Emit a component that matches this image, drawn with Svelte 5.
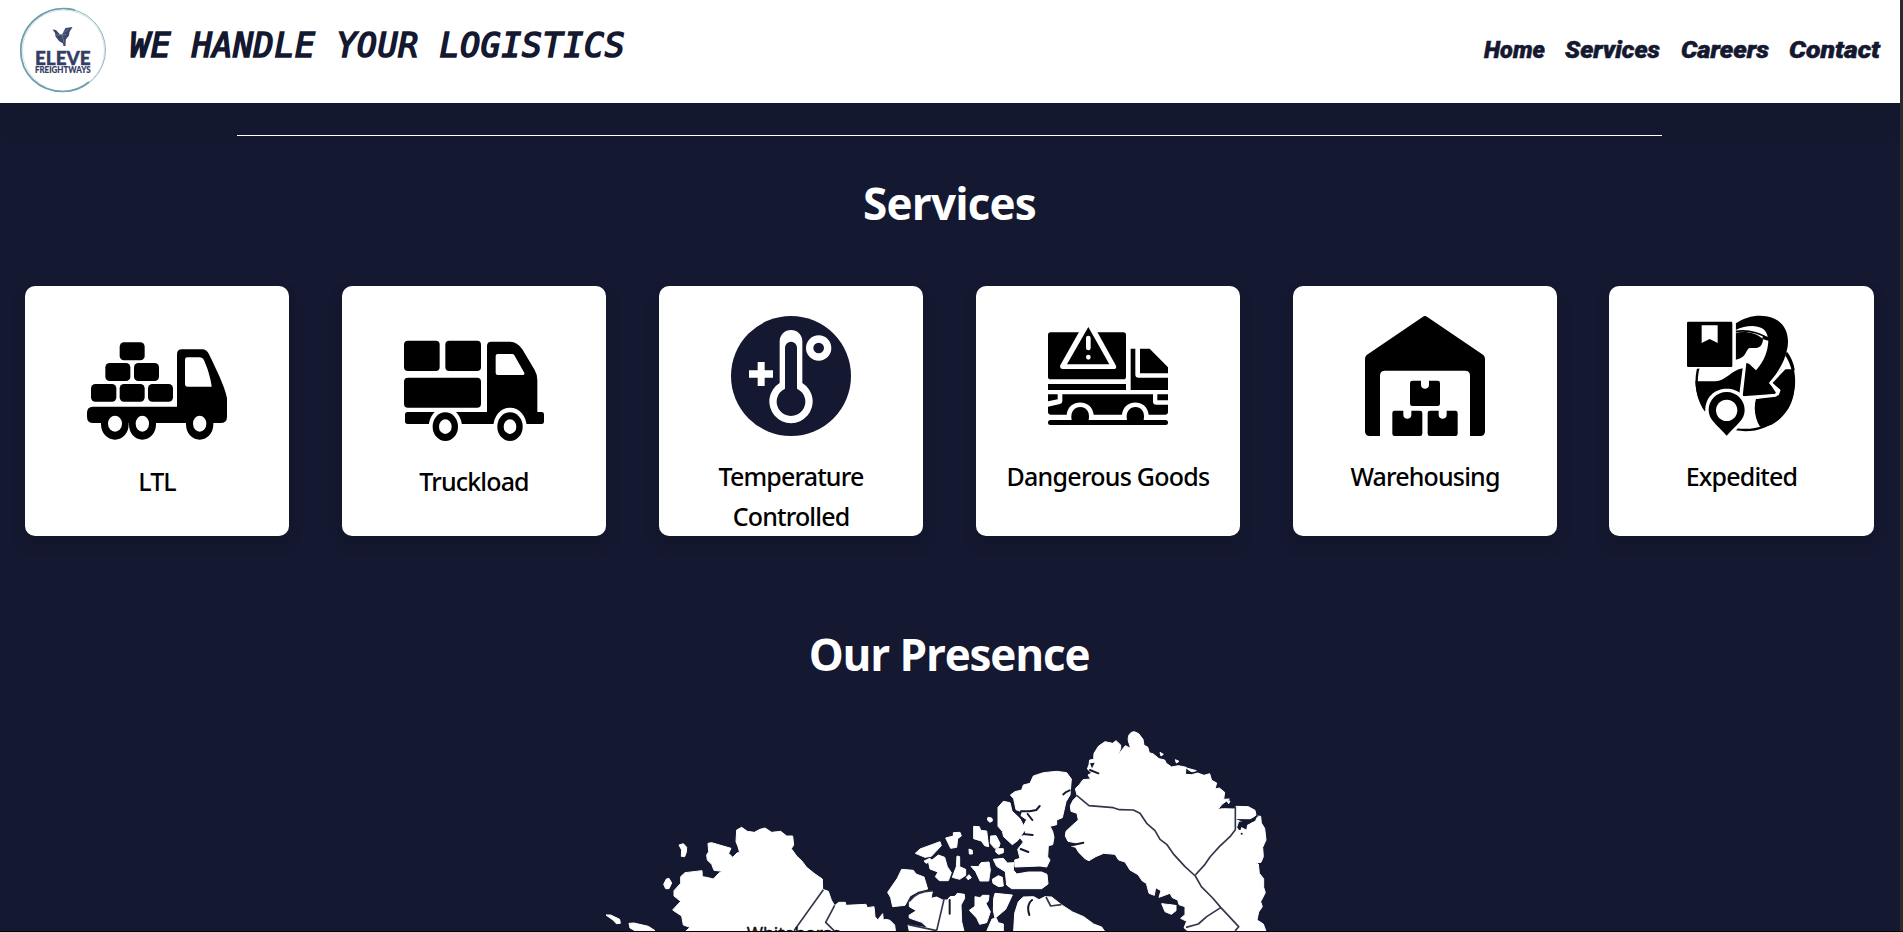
<script>
  const links = [
    { label: 'Home', width: 61 },
    { label: 'Services', width: 95 },
    { label: 'Careers', width: 88 },
    { label: 'Contact', width: 91 }
  ];
  const services = [
    { id: 'ltl', label: 'LTL', box: '75 48 792 480' },
    { id: 'truckload', label: 'Truckload', box: '36 48 792 480' },
    { id: 'temperature', label: 'Temperature Controlled', box: '57 48 792 480' },
    { id: 'dangerous', label: 'Dangerous Goods', box: '48 48 792 480' },
    { id: 'warehousing', label: 'Warehousing', box: '39 48 792 480' },
    { id: 'expedited', label: 'Expedited', box: '57 48 792 480' }
  ];
</script>

<div class="window">
  <div class="page">
    <header>
      <svg class="logo" viewBox="0 0 90 90">
        <ellipse cx="44" cy="42" rx="42.500" ry="41.500" fill="none" stroke="#8fb5c0" stroke-width="1" />
        <ellipse cx="44.500" cy="42.500" rx="41" ry="40.500" fill="none" stroke="#c0d7de" stroke-width=".7" />
        <path d="M56 2C30 -5 1.800 14 1.800 43C1.800 66 20 83.500 44 83.500C56 83.500 64 79 70 74" fill="none" stroke="#6f9fac" stroke-width="1.700" />
        <path d="M53.500 19L46.500 20L43 26.500L41 26.500L37 22L33.500 21.500L36 25L36.500 28.500L40 33L44 35.500L44.500 38H46.500L46.800 31.500L50 27.500L50.500 24Z" fill="#3d476b" />
        <path d="M36.500 27L47 26.500M43 26.500L45 35M44 25L50 21" stroke="#8a91a8" stroke-width=".6" fill="none" />
        <text class="brand" x="16" y="56.500" textLength="55.500" lengthAdjust="spacingAndGlyphs">ELEVE</text>
        <text class="sub" x="16" y="65" textLength="55.500" lengthAdjust="spacingAndGlyphs">FREIGHTWAYS</text>
      </svg>
      <h1>WE HANDLE YOUR LOGISTICS</h1>
      <nav>
        {#each links as link}
          <a href="#{link.label}" aria-label={link.label}>
            <svg width={link.width} height="30"><text x="0" y="23" textLength={link.width} lengthAdjust="spacingAndGlyphs">{link.label}</text></svg>
          </a>
        {/each}
      </nav>
    </header>

    <main>
      <hr />
      <h2 class="services-title">Services</h2>
      <section class="cards">
        {#each services as service}
          <article class="card {service.id}">
            <svg viewBox={service.box}>
              {#if service.id === 'ltl'}
                <rect x="359" y="217" width="75" height="54" rx="13" />
                <rect x="316" y="279" width="75" height="54" rx="13" />
                <rect x="402" y="279" width="75" height="54" rx="13" />
                <rect x="273" y="342" width="76" height="53" rx="13" />
                <rect x="359" y="342" width="75" height="53" rx="13" />
                <rect x="444" y="342" width="75" height="53" rx="13" />
                <path fill-rule="evenodd" d="M279 410H531V253Q531 238 546 238H606Q620 238 627 253C645 290 677 355 681 385V440Q681 459 661 459H280Q261 459 261 440V428Q261 410 279 410ZM562 262Q555 262 555 269V342Q555 350 563 350H635C632 322 620 288 612 271Q608 262 598 262Z" />
                <path d="M303 450H386V463C386 490 368 509 345 509S303 490 303 463ZM387 450H468V463C468 490 450 509 427 509S387 490 387 463ZM558 450H640V463C640 490 622 509 599 509S558 490 558 463Z" />
                <g class="white"><ellipse cx="345" cy="461" rx="21" ry="24" /><ellipse cx="427" cy="461" rx="20" ry="24" /><ellipse cx="599" cy="461" rx="20" ry="24" /></g>
              {:else if service.id === 'truckload'}
                <rect x="222" y="212" width="107" height="91" rx="12" />
                <rect x="346" y="212" width="107" height="91" rx="12" />
                <path fill-rule="evenodd" d="M233 426H471V228Q471 215 484 215H540Q562 215 577 238L614 300Q622 314 622 330V426H635Q642 426 642 433V455Q642 462 635 462H233Q225 462 225 454V434Q225 426 233 426ZM503 252Q497 252 497 258V309Q497 315 503 315H578Q586 315 582 307L553 256Q551 252 546 252Z" />
                <g class="white"><ellipse cx="346" cy="470" rx="50" ry="57" /><ellipse cx="540" cy="470" rx="50" ry="57" /></g>
                <rect x="222" y="323" width="231" height="90" rx="12" />
                <ellipse cx="346" cy="470" rx="38" ry="43" /><ellipse cx="540" cy="470" rx="38" ry="43" />
                <g class="white"><ellipse cx="346" cy="470" rx="19" ry="22" /><ellipse cx="540" cy="470" rx="19" ry="22" /></g>
              {:else if service.id === 'temperature'}
                <circle cx="453" cy="318" r="180" fill="#141830" />
                <g class="white">
                  <path d="M353 276H374V301H399V323H374V348H353V323H327V301H353Z" />
                  <path fill-rule="evenodd" d="M419 214A34 34 0 0 1 487 214V339A65 65 0 1 1 419 339ZM435 233V356A43 43 0 1 0 471 356V233A18 18 0 0 0 435 233Z" />
                </g>
                <circle cx="536" cy="234" r="27" fill="none" stroke="#fff" stroke-width="22" />
              {:else if service.id === 'dangerous'}
                <rect x="264" y="187" width="234" height="141" rx="8" />
                <path class="white" d="M362 177L301 286Q298 297 309 297H460Q471 297 468 287L407 177Z" />
                <path d="M385 171L448 283H321Z" />
                <path d="M385 204V234M385 261V262" stroke="#fff" stroke-width="14" stroke-linecap="round" />
                <rect x="264" y="342" width="234" height="18" />
                <path d="M512 236H526V314Q526 323 536 323H624V360H512ZM540 236H569L624 292V310H540ZM592 373H624V391H592ZM264 373H293V388L264 394ZM307 373H579V395Q579 404 589 404H624V425Q624 434 615 434H566C562 385 490 385 486 434H401C397 385 324 385 320 434H273Q264 434 264 425V410L300 402Q307 400 307 393Z" />
                <path d="M335 450C325 398 397 398 386 450ZM501 450C491 398 562 398 551 450Z" />
                <rect x="264" y="450" width="360" height="15" rx="7.500" />
              {:else if service.id === 'warehousing'}
                <path d="M428 141Q435 135 442 141L610 255Q615 260 615 267V484Q615 498 601 498H570V317Q570 302 555 302H315Q300 302 300 317V498H269Q255 498 255 484V267Q255 260 260 255Z" />
                <path id="parcel" d="M397 332H423V345C423 360 447 360 447 345V332H473Q480 332 480 339V401Q480 408 473 408H397Q390 408 390 401V339Q390 332 397 332Z" />
                <use href="#parcel" x="-53" y="90" /><use href="#parcel" x="53" y="90" />
              {:else}
                <circle cx="466" cy="334" r="146" fill="#fff" stroke="#000" stroke-width="7" />
                <path d="M320 334H376C406 334 425 300 458 295L448 372L344 424C327 400 318 368 316 334Z" />
                <path d="M575 298H605C620 340 614 390 590 423C568 453 543 472 510 470C495 446 490 414 498 386L566 376L572 360L542 339Z" />
                <path class="white" d="M427 130H600V245L585 256L577 290L535 340L560 378L456 385L466 272L427 280Z" />
                <path d="M437 188C470 182 500 190 519 207C519 222 510 234 498 234H480C470 234 468 256 456 262Q448 267 437 269Z" />
                <path d="M437 160C475 135 519 130 555 147C588 163 599 199 592 235C585 275 563 308 538 338L560 371L458 379L469 279L477 281L498 301C525 270 534 240 535 212L517 207L519 195L533 201C528 162 475 161 437 180Z" />
                <path d="M437 184C475 179 505 187 534 205" fill="none" stroke="#000" stroke-width="5" />
                <path d="M589 248C601 264 608 282 611 301" fill="none" stroke="#000" stroke-width="7" />
                <path d="M584 294L542 339L566 361L557 376L498 383" fill="none" stroke="#fff" stroke-width="8" stroke-linejoin="round" />
                <rect x="286" y="151" width="151" height="145" class="white" />
                <rect x="291" y="155" width="136" height="136" rx="4" />
                <path class="white" d="M335 166H383V219L359 207L335 219Z" />
                <path class="white" d="M346 428C339 333 480 333 474 425C467 450 445 475 412 509L349 449Z" />
                <path d="M410 366C440 366 464 390 464 420C464 450 440 463 410 497C380 463 356 450 356 420C356 390 380 366 410 366Z" />
                <circle class="white" cx="410" cy="421" r="32" />
              {/if}
            </svg>
            <h3>{service.label}</h3>
          </article>
        {/each}
      </section>

      <h2 class="presence-title">Our Presence</h2>
      <svg class="map" viewBox="-840 75 2100 618">
        <g class="land">
          <path d="M-400 390L-385 382L-368 394L-347 397L-330 388L-315 384L-295 397L-268 394L-250 408L-232 408L-229 435L-236 446L-220 468L-205 482L-190 502L-165 522L-143 537L-142 568L-125 574L-116 600L-106 617L-94 607L-74 607L-72 616L-12 613L-8 623L12 620L15 650L23 660L38 641L40 660L48 658L60 661L74 675L77 700H-560L-540 682L-560 675L-565 648L-592 630L-568 604L-588 588L-588 572L-568 550L-568 530L-555 518L-504 512L-503 530L-490 532L-470 537L-452 518L-442 514L-468 511L-475 493L-488 480L-490 465L-484 455L-486 430L-475 428L-417 445L-424 460L-412 472L-398 458L-391 458L-396 440L-402 425Z" />
          <path d="M-573 435L-560 431L-550 442L-551 456L-556 470L-566 469L-565 450ZM-611 537L-603 535L-595 549L-603 566L-613 566L-619 553ZM-792 645H-778L-751 658L-749 670L-761 671L-770 661ZM-723 670L-708 669L-665 679L-645 692H-705L-720 684Z" />
          <path d="M95 508L130 511L138 522L162 531L173 567L145 574L120 588L105 616L68 620L62 593L53 577L82 535Z" />
          <path d="M118 607L138 585L170 575H187L183 595L200 591L218 600H232L240 590L255 589L262 580L283 583L284 595L273 615L275 665L282 694H118L114 675L174 684L155 667L118 654L117 646L139 632L118 620Z" />
          <path d="M136 460L150 447L210 425L214 437L184 469L165 472ZM176 488L205 465L224 472L232 500L244 518L235 542H208L196 530L204 516L180 507ZM162 483L180 475L187 482L168 490ZM247 532L259 500L261 468L269 470V500L287 508V526L269 538ZM289 532L297 524L304 533L294 539ZM303 499L325 500L333 488L357 486L361 510L356 543H330L317 515ZM227 414L250 408V398L270 397L274 408L263 416L260 442L242 445ZM311 379L328 380L332 391L350 393L356 440L344 437L334 423L311 416ZM354 352L365 354L368 362L360 367L352 360ZM362 408L378 407L390 430L387 441L374 445L361 430ZM378 446L400 446V458L386 463L377 456ZM297 447L307 451V462L298 462Z" />
          <path d="M384 322L400 304L420 308L426 333L450 356L466 388L444 421L427 434L401 410L397 394L384 379Z" />
          <path d="M421 285L435 275L455 270L460 255L480 250L490 228L520 218L560 214L590 218L604 237L600 285L588 305L577 353L560 360V374L540 379L548 394L552 412L548 434L535 437L533 470L540 480L530 501L510 498L435 501L434 480L450 475L443 448L460 426L448 411L468 405L461 376L470 359L453 347L457 336L438 329L431 296Z" />
          <path d="M370 478L400 475L412 489L432 488L430 510L440 522L475 516L515 516L531 523L534 552L515 566H425L410 555L406 515L380 499ZM367 538L385 527L397 532L400 558L386 560L369 550ZM375 580L427 585L407 628L375 655L370 632L371 595ZM315 590L330 593L337 586H357L355 602L348 611L361 635L350 668L329 673L320 654L298 631L315 619ZM350 694L366 657L379 655L385 668L400 672V694Z" />
          <path d="M431 693L434 640L445 605L460 591L491 590L507 599L525 590L545 591L574 614L608 636L641 650L671 672L695 681L704 694Z" />
          <path d="M793 95C778 96 773 109 775 123L782 145L766 137L755 151L743 166L752 146V135L738 122L728 130L705 125L686 138L672 160L671 178L659 180L657 194L652 207L665 219L654 225L662 237L639 239L628 254L616 266L622 288L609 301L601 317L603 334L621 340L625 360L607 376L588 394L586 408L594 424L625 430L603 438L617 442L626 457L646 477L657 482L677 470L701 460L735 463L746 480L765 486L780 510L804 524L817 543L829 550L837 580L853 586L857 563L873 572L867 592L900 580L907 593L923 600L927 614L945 620V644L932 655L950 664L942 683L954 694H1188L1180 672L1161 660L1166 636L1177 620L1172 605L1186 578L1181 562V536L1168 520L1165 492L1155 488L1173 487L1180 470L1178 442L1188 420L1184 385L1174 369L1172 349L1162 348L1157 363L1133 375L1130 391L1115 383L1107 390L1100 382L1106 364L1141 359L1158 345L1155 331L1135 320L1098 319L1094 327L1060 326L1044 328L1056 313L1078 297L1061 298L1064 277L1048 264L1035 267L1040 249L1025 241L1019 221L1002 226L983 219L965 224L946 223L949 202L925 197L905 201L889 190L884 180L867 176L850 162L838 158L833 141L822 136L819 118L806 101Z" />
          <path d="M870 157L880 163L873 168ZM916 179L927 184L919 189ZM950 204L979 212L961 217ZM1038 302H1046L1042 310ZM1070 302L1080 303L1076 311ZM875 611L918 615V632L904 643L885 635Z" />
        </g>
        <g class="borders">
          <path d="M620 286L657 317L730 323L748 329L790 330L810 340L830 370L855 392L870 418L890 433L912 464L945 500L976 528L994 560L1028 594L1052 622L1106 680L1095 693" />
          <path d="M976 525L1005 493L1020 471L1048 440L1080 410L1096 389V320M1052 623L1010 650L985 672L948 682" />
          <path d="M-140 569L-228 692M-106 616L-133 667L-108 692M222 598L200 692M115 674L200 692M528 591L542 618L574 614M118 604Q142 572 187 573" />
        </g>
        <g fill="none" stroke="#141830" stroke-width="6" stroke-linecap="round">
          <path d="M453 334H479L499 330L509 318M473 342L487 360M466 403L488 405M452 447L475 456M599 271Q585 276 580 283M478 645Q468 615 486 600M239 600V641M599 437L640 428M660 210L685 220M867 604L920 612" />
        </g>
        <g fill="#141830"><circle cx="1109" cy="386" r="4" /><circle cx="1115" cy="401" r="3" /><path d="M1098 357L1140 358L1168 346L1136 373ZM660 190L674 188L666 205ZM948 207L970 220H952Z" /></g>
        <text x="-370" y="716" textLength="284" lengthAdjust="spacingAndGlyphs">Whitehorse</text>
      </svg>
    </main>
  </div>
</div>

<style>
  :global(body) { margin: 0; overflow: hidden; background: #2b2b2b; }
  .window { box-sizing: border-box; width: 1903px; height: 932px; padding-right: 3px; border-bottom: 1px solid #000; overflow: hidden; }
  .page { width: 1900px; height: 931px; overflow: hidden; background: #141830; }
  header { display: flex; align-items: flex-start; box-sizing: border-box; height: 103px; padding-left: 19px; background: #fff; box-shadow: 0 8px 28px rgba(17, 24, 32, .4); }
  .logo { width: 90px; height: 90px; margin-top: 8px; flex: none; overflow: visible; }
  .logo text { font-family: Lato, sans-serif; font-weight: 900; fill: #343d66; stroke: #343d66; }
  .logo .brand { font-size: 18px; stroke-width: .4px; }
  .logo .sub { font-size: 8.500px; stroke-width: .15px; }
  h1 { margin: 24px 0 0 21px; font: italic 400 33px/44px "DejaVu Sans Mono", monospace; letter-spacing: .77px; color: #141830; -webkit-text-stroke: 1.700px #141830; white-space: nowrap; }
  nav { display: flex; gap: 20.500px; margin: 35px 0 0 auto; padding-right: 20px; }
  nav a { display: block; color: #141830; text-decoration: none; }
  nav svg { display: block; overflow: visible; }
  nav text { font: italic 900 23px "Roboto", sans-serif; fill: currentColor; stroke: currentColor; stroke-width: .5px; }
  main { position: relative; display: flex; flex-direction: column; }
  hr { width: 1425px; height: 1px; margin: 32px 0 0 237px; border: 0; background: #fff; }
  h2 { margin: 0; text-align: center; font: 700 44px/60px "Open Sans", "Noto Sans", sans-serif; color: #fff; }
  .services-title { margin-top: 37px; padding-right: 1px; letter-spacing: -.8px; }
  .cards { display: grid; grid-template-columns: repeat(6, 264px); gap: 53px; padding-left: 25px; margin-top: 53px; }
  .card { height: 250px; border-radius: 10px; background: #fff; box-shadow: 0 8px 14px rgba(17, 20, 32, .25); }
  .expedited { margin-left: -1px; }
  .card svg { display: block; width: 264px; height: 160px; }
  .white { fill: #fff; }
  h3 { margin: 10px 20px 0; text-align: center; font: 500 25px/40px "Noto Sans", "Open Sans", sans-serif; letter-spacing: -.85px; color: #000; }
  .ltl h3, .truckload h3 { margin-top: 15px; }
  .dangerous h3 { margin-left: 10px; margin-right: 10px; letter-spacing: -.75px; }
  .presence-title { margin-top: 88px; padding-right: 2px; letter-spacing: -1.15px; }
  .map { display: block; width: 700px; height: 206px; margin: 41px 0 0 590px; }
  .land { fill: #fff; stroke: #fff; stroke-width: 3; stroke-linejoin: round; }
  .borders { fill: none; stroke: #33364a; stroke-width: 5; stroke-linejoin: round; }
  .map text { font: 50px "Open Sans", sans-serif; fill: #111; stroke: #111; stroke-width: 1.500; }
</style>
